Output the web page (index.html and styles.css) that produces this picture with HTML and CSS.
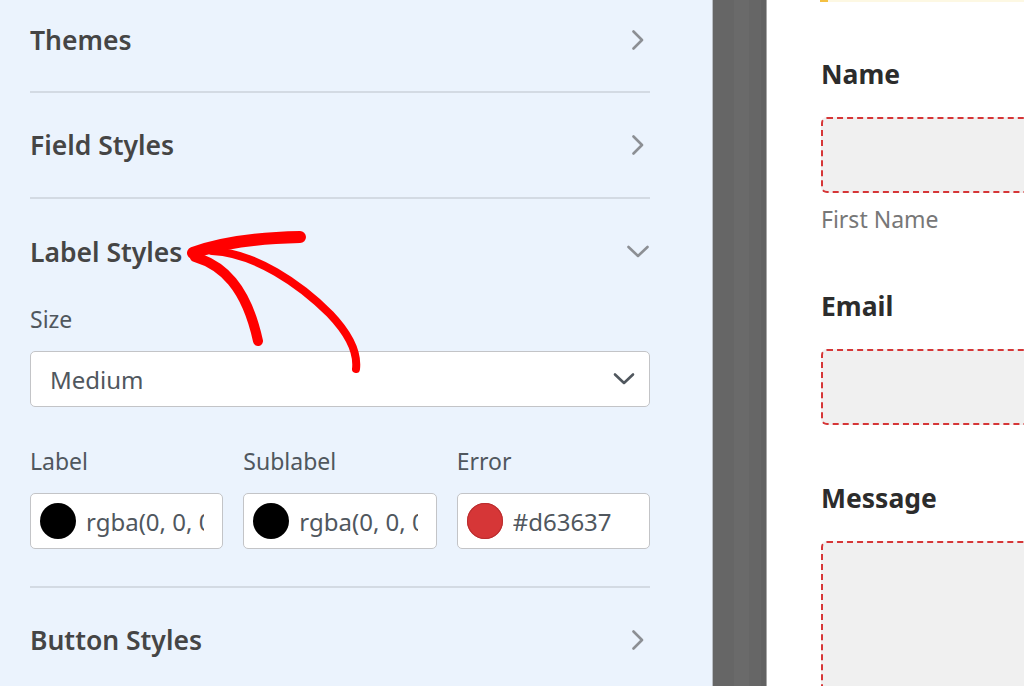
FILE: index.html
```html
<!DOCTYPE html>
<html lang="en">
<head>
    <meta charset="UTF-8">
    <title>Form styles</title>
    <link rel="stylesheet" href="styles.css">
</head>
<body>
    <div class="page">
        <div class="sidebar">
            <div class="panel">
                <div class="panel-head first">
                    <span>Themes</span>
                    <svg class="chev" width="24" height="20" viewBox="0 0 24 20"><path d="M7.5 1.5 L16 10 L7.5 18.5"/></svg>
                </div>
            </div>
            <div class="panel">
                <div class="panel-head">
                    <span>Field Styles</span>
                    <svg class="chev" width="24" height="20" viewBox="0 0 24 20"><path d="M7.5 1.5 L16 10 L7.5 18.5"/></svg>
                </div>
            </div>
            <div class="panel open">
                <div class="panel-head">
                    <span>Label Styles</span>
                    <svg class="chev" width="24" height="14" viewBox="0 0 24 14"><path d="M2.5 2 L12 11 L21.5 2"/></svg>
                </div>
                <div class="panel-body">
                    <div class="field-label">Size</div>
                    <div class="select">
                        <span>Medium</span>
                        <svg width="22" height="14" viewBox="0 0 22 14"><path d="M2 2.5 L11 11 L20 2.5"/></svg>
                    </div>
                    <div class="colors">
                        <div class="color">
                            <div class="field-label">Label</div>
                            <div class="color-input">
                                <i class="swatch black"></i>
                                <span>rgba(0, 0, 0, 1)</span>
                            </div>
                        </div>
                        <div class="color">
                            <div class="field-label">Sublabel</div>
                            <div class="color-input">
                                <i class="swatch black"></i>
                                <span>rgba(0, 0, 0, 0.55)</span>
                            </div>
                        </div>
                        <div class="color">
                            <div class="field-label">Error</div>
                            <div class="color-input">
                                <i class="swatch red"></i>
                                <span>#d63637</span>
                            </div>
                        </div>
                    </div>
                </div>
            </div>
            <div class="panel">
                <div class="panel-head">
                    <span>Button Styles</span>
                    <svg class="chev" width="24" height="20" viewBox="0 0 24 20"><path d="M7.5 1.5 L16 10 L7.5 18.5"/></svg>
                </div>
            </div>
        </div>

        <div class="gutter"></div>

        <div class="preview">
            <div class="notice"></div>
            <div class="form-field">
                <div class="form-label">Name</div>
                <div class="form-input"></div>
                <div class="sublabel">First Name</div>
            </div>
            <div class="form-field">
                <div class="form-label">Email</div>
                <div class="form-input"></div>
            </div>
            <div class="form-field">
                <div class="form-label">Message</div>
                <div class="form-input area"></div>
            </div>
        </div>

        <!-- hand drawn arrow pointing at Label Styles -->
        <svg class="arrow" width="1024" height="686" viewBox="0 0 1024 686">
            <path class="barb-top" d="M193 253 C 215 245, 252 238, 300 237"/>
            <path class="barb-low" d="M195 257 C 222 265, 246 286, 258 341"/>
            <path class="shaft" d="M212 251 C 255 253, 300 284, 330 314 C 350 335, 358 352, 356 369"/>
        </svg>
    </div>
</body>
</html>
```

FILE: styles.css
```css
body,div,span{margin:0;padding:0;}
body{font-family:"Noto Sans","Open Sans",Arial,sans-serif;overflow:hidden;}

.page{position:relative;display:flex;width:1024px;height:686px;overflow:hidden;}

/* left settings column */
.sidebar{width:620px;padding:0 62px 0 30px;background:#ebf3fd;border-right:1px solid #b9bec4;flex-shrink:0;}
.panel{border-bottom:2px solid #d3dae3;}
.panel-head{display:flex;align-items:center;justify-content:space-between;height:104px;font-size:26.5px;font-weight:600;color:#454545;}
.panel-head.first{height:79px;padding-bottom:12px;}
.open .panel-head{height:106px;}
.chev path{fill:none;stroke:#8c8f94;stroke-width:2.6;stroke-linecap:round;stroke-linejoin:round;}

.panel-body{padding-bottom:37px;}
.field-label{font-size:23px;line-height:28px;color:#50575e;margin-bottom:18px;}
.select{display:flex;align-items:center;justify-content:space-between;box-sizing:border-box;height:56px;padding:0 14px 0 19px;background:#fff;border:1.5px solid #c3c4c7;border-radius:5px;font-size:24px;color:#50575e;margin-bottom:40px;}
.select path{fill:none;stroke:#50575e;stroke-width:2.6;stroke-linecap:round;stroke-linejoin:round;}

.colors{display:grid;grid-template-columns:repeat(3,minmax(0,1fr));column-gap:20px;}
.color-input{display:flex;align-items:center;box-sizing:border-box;height:56px;padding:0 18px 0 9px;background:#fff;border:1.5px solid #c3c4c7;border-radius:5px;overflow:hidden;}
.color-input span{flex:1;min-width:0;overflow:hidden;white-space:nowrap;font-size:24px;color:#50575e;margin-left:10px;}
.swatch{display:block;width:36px;height:36px;border-radius:50%;flex-shrink:0;}
.swatch.black{background:#000;}
.swatch.red{background:#d63637;box-shadow:inset 0 0 0 1px #b92d2e;}

/* dark strip between columns */
.gutter{width:53px;flex-shrink:0;background:linear-gradient(to right,#666 0,#666 21px,#6a6a6a 21px,#6a6a6a 36px,#666 36px,#666 48px,#626262 48px);border-right:1px solid #a7a7a7;}

/* form preview */
.preview{flex:1;background:#fff;padding-left:54px;}
.notice{height:2px;background:#fdf8e3;border-left:8px solid #f4c042;margin-left:-1px;margin-bottom:54px;}
.form-field{width:420px;margin-bottom:55px;}
.form-label{font-size:26.5px;line-height:36px;font-weight:700;color:#2c2c2c;margin-bottom:25px;}
.form-input{box-sizing:border-box;height:76px;background:#f0f0f0;border:2px dashed #d63637;border-radius:6px;}
.form-input.area{height:200px;}
.sublabel{font-size:23px;line-height:28px;color:#777;margin-top:12px;}

.arrow{position:absolute;left:0;top:0;pointer-events:none;}
.arrow path{fill:none;stroke:#ff0000;stroke-linecap:round;stroke-linejoin:round;}
.arrow .barb-top{stroke-width:12;}
.arrow .barb-low{stroke-width:10;}
.arrow .shaft{stroke-width:8;}
```
